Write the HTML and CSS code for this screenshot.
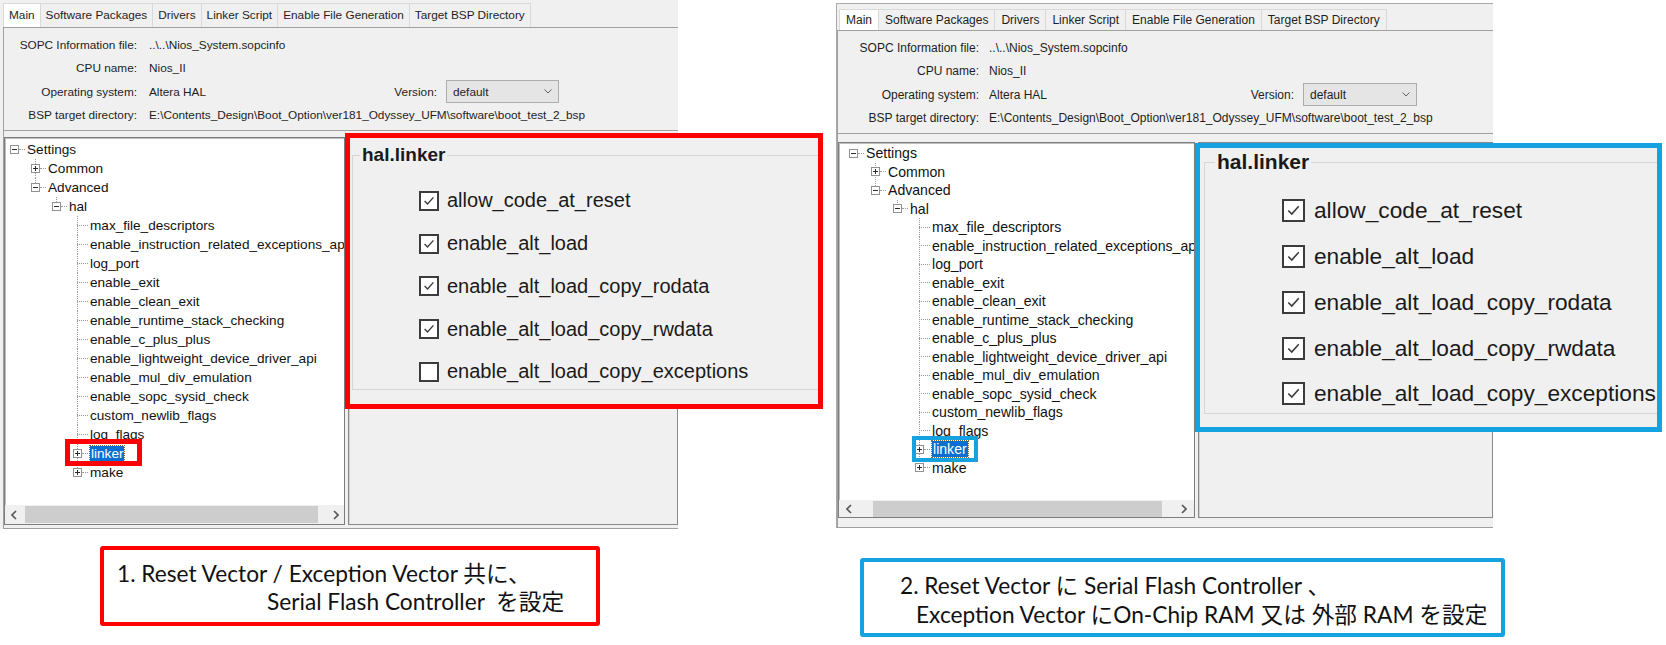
FILE: index.html
```html
<!DOCTYPE html>
<html lang="ja">
<head>
    <meta charset="UTF-8">
    <title>BSP Editor - hal.linker</title>
    <link rel="stylesheet" href="styles.css">
</head>
<body>
<div class="slide">

    <!-- 1. Reset / Exception 共に Serial Flash Controller -->
    <section class="case case-1">
        <div class="shot">
            <div class="tabs">
                <span class="tab active">Main</span>
                <span class="tab">Software Packages</span>
                <span class="tab">Drivers</span>
                <span class="tab">Linker Script</span>
                <span class="tab">Enable File Generation</span>
                <span class="tab">Target BSP Directory</span>
            </div>
            <div class="tab-body">
                <div class="info">
                    <span class="lbl">SOPC Information file:</span><span class="val">..\..\Nios_System.sopcinfo</span>
                    <span class="lbl">CPU name:</span><span class="val">Nios_II</span>
                    <span class="lbl">Operating system:</span>
                    <span class="val os"><span>Altera HAL</span><span class="ver">Version:</span><span class="select">default<svg viewBox="0 0 8 5"><path d="M0.5 0.5l3.5 3.5 3.5-3.5"/></svg></span></span>
                    <span class="lbl">BSP target directory:</span><span class="val">E:\Contents_Design\Boot_Option\ver181_Odyssey_UFM\software\boot_test_2_bsp</span>
                </div>
                <div class="split">
                    <div class="tree">
                        <div class="rows">
                            <div class="row l0"><i class="exp"></i><i class="tick"></i>Settings</div>
                            <div class="row l1 down"><i class="exp plus"></i><i class="tick"></i>Common</div>
                            <div class="row l1 up"><i class="exp"></i><i class="tick"></i>Advanced</div>
                            <div class="row l2 up"><i class="exp"></i><i class="tick"></i>hal</div>
                            <div class="row l3"><i class="twig"></i>max_file_descriptors</div>
                            <div class="row l3"><i class="twig"></i>enable_instruction_related_exceptions_api</div>
                            <div class="row l3"><i class="twig"></i>log_port</div>
                            <div class="row l3"><i class="twig"></i>enable_exit</div>
                            <div class="row l3"><i class="twig"></i>enable_clean_exit</div>
                            <div class="row l3"><i class="twig"></i>enable_runtime_stack_checking</div>
                            <div class="row l3"><i class="twig"></i>enable_c_plus_plus</div>
                            <div class="row l3"><i class="twig"></i>enable_lightweight_device_driver_api</div>
                            <div class="row l3"><i class="twig"></i>enable_mul_div_emulation</div>
                            <div class="row l3"><i class="twig"></i>enable_sopc_sysid_check</div>
                            <div class="row l3"><i class="twig"></i>custom_newlib_flags</div>
                            <div class="row l3"><i class="twig"></i>log_flags</div>
                            <div class="row l3"><i class="exp plus"></i><i class="tick"></i><span class="sel">linker</span></div>
                            <div class="row l3 last"><i class="exp plus"></i><i class="tick"></i>make</div>
                        </div>
                        <div class="hscroll">
                            <span class="arrow"><svg viewBox="0 0 6 10"><path d="M5 1L1 5l4 4"/></svg></span>
                            <span class="thumb"></span>
                            <span class="arrow"><svg viewBox="0 0 6 10"><path d="M1 1l4 4-4 4"/></svg></span>
                        </div>
                    </div>
                    <div class="props"></div>
                </div>
            </div>

            <div class="mark"></div>
            <div class="inset">
                <fieldset class="group">
                    <legend>hal.linker</legend>
                    <div class="checks">
                        <label class="check"><span class="cb"><svg viewBox="0 0 20 20"><path d="M4.5 10l3.7 3.8L15.5 5.5"/></svg></span>allow_code_at_reset</label>
                        <label class="check"><span class="cb"><svg viewBox="0 0 20 20"><path d="M4.5 10l3.7 3.8L15.5 5.5"/></svg></span>enable_alt_load</label>
                        <label class="check"><span class="cb"><svg viewBox="0 0 20 20"><path d="M4.5 10l3.7 3.8L15.5 5.5"/></svg></span>enable_alt_load_copy_rodata</label>
                        <label class="check"><span class="cb"><svg viewBox="0 0 20 20"><path d="M4.5 10l3.7 3.8L15.5 5.5"/></svg></span>enable_alt_load_copy_rwdata</label>
                        <label class="check"><span class="cb"></span>enable_alt_load_copy_exceptions</label>
                    </div>
                </fieldset>
            </div>
        </div>

        <div class="note">
            1. Reset Vector / Exception Vector 共に、<br>
            <span class="second">Serial Flash Controller&nbsp; を設定</span>
        </div>
    </section>

    <!-- 2. Reset は Serial Flash / Exception は RAM -->
    <section class="case case-2">
        <div class="shot">
            <div class="tabs">
                <span class="tab active">Main</span>
                <span class="tab">Software Packages</span>
                <span class="tab">Drivers</span>
                <span class="tab">Linker Script</span>
                <span class="tab">Enable File Generation</span>
                <span class="tab">Target BSP Directory</span>
            </div>
            <div class="tab-body">
                <div class="info">
                    <span class="lbl">SOPC Information file:</span><span class="val">..\..\Nios_System.sopcinfo</span>
                    <span class="lbl">CPU name:</span><span class="val">Nios_II</span>
                    <span class="lbl">Operating system:</span>
                    <span class="val os"><span>Altera HAL</span><span class="ver">Version:</span><span class="select">default<svg viewBox="0 0 8 5"><path d="M0.5 0.5l3.5 3.5 3.5-3.5"/></svg></span></span>
                    <span class="lbl">BSP target directory:</span><span class="val">E:\Contents_Design\Boot_Option\ver181_Odyssey_UFM\software\boot_test_2_bsp</span>
                </div>
                <div class="split">
                    <div class="tree">
                        <div class="rows">
                            <div class="row l0"><i class="exp"></i><i class="tick"></i>Settings</div>
                            <div class="row l1 down"><i class="exp plus"></i><i class="tick"></i>Common</div>
                            <div class="row l1 up"><i class="exp"></i><i class="tick"></i>Advanced</div>
                            <div class="row l2 up"><i class="exp"></i><i class="tick"></i>hal</div>
                            <div class="row l3"><i class="twig"></i>max_file_descriptors</div>
                            <div class="row l3"><i class="twig"></i>enable_instruction_related_exceptions_api</div>
                            <div class="row l3"><i class="twig"></i>log_port</div>
                            <div class="row l3"><i class="twig"></i>enable_exit</div>
                            <div class="row l3"><i class="twig"></i>enable_clean_exit</div>
                            <div class="row l3"><i class="twig"></i>enable_runtime_stack_checking</div>
                            <div class="row l3"><i class="twig"></i>enable_c_plus_plus</div>
                            <div class="row l3"><i class="twig"></i>enable_lightweight_device_driver_api</div>
                            <div class="row l3"><i class="twig"></i>enable_mul_div_emulation</div>
                            <div class="row l3"><i class="twig"></i>enable_sopc_sysid_check</div>
                            <div class="row l3"><i class="twig"></i>custom_newlib_flags</div>
                            <div class="row l3"><i class="twig"></i>log_flags</div>
                            <div class="row l3"><i class="exp plus"></i><i class="tick"></i><span class="sel">linker</span></div>
                            <div class="row l3 last"><i class="exp plus"></i><i class="tick"></i>make</div>
                        </div>
                        <div class="hscroll">
                            <span class="arrow"><svg viewBox="0 0 6 10"><path d="M5 1L1 5l4 4"/></svg></span>
                            <span class="thumb"></span>
                            <span class="arrow"><svg viewBox="0 0 6 10"><path d="M1 1l4 4-4 4"/></svg></span>
                        </div>
                    </div>
                    <div class="props"></div>
                </div>
            </div>

            <div class="mark"></div>
            <div class="inset">
                <fieldset class="group">
                    <legend>hal.linker</legend>
                    <div class="checks">
                        <label class="check"><span class="cb"><svg viewBox="0 0 20 20"><path d="M4.5 10l3.7 3.8L15.5 5.5"/></svg></span>allow_code_at_reset</label>
                        <label class="check"><span class="cb"><svg viewBox="0 0 20 20"><path d="M4.5 10l3.7 3.8L15.5 5.5"/></svg></span>enable_alt_load</label>
                        <label class="check"><span class="cb"><svg viewBox="0 0 20 20"><path d="M4.5 10l3.7 3.8L15.5 5.5"/></svg></span>enable_alt_load_copy_rodata</label>
                        <label class="check"><span class="cb"><svg viewBox="0 0 20 20"><path d="M4.5 10l3.7 3.8L15.5 5.5"/></svg></span>enable_alt_load_copy_rwdata</label>
                        <label class="check"><span class="cb"><svg viewBox="0 0 20 20"><path d="M4.5 10l3.7 3.8L15.5 5.5"/></svg></span>enable_alt_load_copy_exceptions</label>
                    </div>
                </fieldset>
            </div>
        </div>

        <div class="note">
            2. Reset Vector に Serial Flash Controller 、<br>
            <span class="second">Exception Vector にOn-Chip RAM 又は 外部 RAM を設定</span>
        </div>
    </section>

</div>
</body>
</html>
```

FILE: styles.css
```css
* {
    box-sizing: border-box;
}

body {
    margin: 0;
    background: #ffffff;
    font-family: "Liberation Sans", Arial, sans-serif;
    color: #000;
}

.slide {
    display: flex;
    width: 1666px;
    height: 645px;
    overflow: hidden;
}

/* 각 케이스: 스크린샷 + 설명 박스 */
.case-1 {
    width: 836px;
    --ui: 11.8px;
    --lbl-w: 133px;
    --lbl-gap: 12px;
    --os-w: 410px;
    --sel-w: 113px;
    --tree-w: 341px;
    --tree-font: 13.6px;
    --row-h: 19px;
    --i0: 5px;
    --ind: 21px;
    --accent: #ff0000;
}

.case-2 {
    flex: 1;
    padding-top: 3px;
    --ui: 12px;
    --lbl-w: 141px;
    --lbl-gap: 10px;
    --os-w: 428px;
    --sel-w: 114px;
    --tree-w: 357px;
    --tree-font: 14.1px;
    --row-h: 18.5px;
    --i0: 10px;
    --ind: 22px;
    --accent: #14a3e0;
}

/* ---------- screenshot ---------- */
.shot {
    position: relative;
    background: #f0f0f0;
    font-size: var(--ui);
    color: #1e1e1e;
}
.case-1 .shot { width: 678px; height: 529px; }
.case-2 .shot {
    width: 657px;
    height: 525px;
    border-top: 1px solid #a9a9a9;
    border-left: 1px solid #a9a9a9;
}

.tabs {
    display: flex;
    height: 27px;
    padding: 3px 0 0 3px;
}
.case-2 .tabs { height: 26px; padding: 5px 0 0 2px; }

.tab {
    padding: 0 5px;
    line-height: 23px;
    border: 1px solid #d9d9d9;
    border-bottom: none;
    margin-right: -1px;
    background: #f0f0f0;
    white-space: nowrap;
}
.case-2 .tab { padding: 0 6px; line-height: 20px; }
.tab.active { background: #ffffff; }

.tab-body {
    height: calc(100% - 27px);
    margin-left: 3px;
    border: 1px solid #a0a0a0;
    border-right: none;
    display: flex;
    flex-direction: column;
}
.case-2 .tab-body { height: calc(100% - 26px); margin-left: 0; }

.info {
    display: grid;
    grid-template-columns: var(--lbl-w) auto;
    grid-auto-rows: 23.5px;
    column-gap: var(--lbl-gap);
    align-items: center;
    padding-top: 5px;
    white-space: nowrap;
}
.lbl { text-align: right; }

.os {
    display: flex;
    align-items: center;
    width: var(--os-w);
}
.ver { margin-left: auto; margin-right: 9px; }
.select {
    width: var(--sel-w);
    height: 23px;
    border: 1px solid #adadad;
    background: #e5e5e5;
    padding: 0 6px;
    display: flex;
    align-items: center;
    justify-content: space-between;
}
.select svg {
    width: 8px;
    height: 5px;
    fill: none;
    stroke: #606060;
}

.split {
    flex: 1;
    display: flex;
    gap: 3px;
    margin-top: 3px;
    padding: 6px 0 3px;
    border-top: 1px solid #a0a0a0;
}
.case-2 .split { padding: 8px 0 9px; }

/* tree */
.tree {
    width: var(--tree-w);
    background: #ffffff;
    border: 1px solid #7d7d7d;
    box-shadow: inset 1px 1px 0 #c0c0c0;
    display: flex;
    flex-direction: column;
    overflow: hidden;
    font-size: var(--tree-font);
    color: #111;
}
.rows {
    flex: 1;
    padding-top: 2px;
}
.case-2 .rows { padding-top: 1px; }

.row {
    display: flex;
    align-items: center;
    height: var(--row-h);
    white-space: nowrap;
    background-repeat: no-repeat;
    background-image: repeating-linear-gradient(#9a9a9a 0 1px, transparent 1px 2px);
    background-size: 0 0;
}
.l0 { padding-left: var(--i0); }
.l1 { padding-left: calc(var(--i0) + var(--ind)); background-position: calc(var(--i0) + var(--ind) + 4px) 0; }
.l2 { padding-left: calc(var(--i0) + 2 * var(--ind)); background-position: calc(var(--i0) + 2 * var(--ind) + 4px) 0; }
.l3 { padding-left: calc(var(--i0) + 3 * var(--ind)); background-position: calc(var(--i0) + 3 * var(--ind) + 4px) 0; background-size: 1px 100%; }
.down { background-size: 1px 100%; }
.up, .last { background-size: 1px 50%; }

.exp {
    position: relative;
    flex: none;
    width: 9px;
    height: 9px;
    border: 1px solid #919191;
    background: #fff;
}
.exp::before {
    content: "";
    position: absolute;
    left: 1px;
    right: 1px;
    top: 3px;
    height: 1px;
    background: #2b2b2b;
}
.exp.plus::after {
    content: "";
    position: absolute;
    top: 1px;
    bottom: 1px;
    left: 3px;
    width: 1px;
    background: #2b2b2b;
}
.tick {
    flex: none;
    width: 6px;
    margin-right: 2px;
    border-top: 1px dotted #9a9a9a;
}
.twig {
    flex: none;
    width: 11px;
    margin: 0 2px 0 4px;
    border-top: 1px dotted #9a9a9a;
}
.sel {
    background: #0a6fd0;
    color: #fff;
    padding: 0 1px;
    outline: 1px dotted #8a6a2a;
}

.hscroll {
    flex: none;
    height: 19px;
    display: flex;
    align-items: center;
    background: #f0f0f0;
}
.arrow {
    width: 17px;
    display: flex;
    justify-content: center;
}
.arrow svg {
    width: 6px;
    height: 10px;
    fill: none;
    stroke: #555;
    stroke-width: 1.6;
}
.thumb {
    flex: 1;
    height: 17px;
    margin: 0 9px 0 3px;
    background: #cdcdcd;
}
.case-2 .hscroll { height: 17px; }
.case-2 .arrow { width: 20px; }
.case-2 .thumb { height: 16px; margin: 0 12px 0 14px; }

.props {
    flex: 1;
    background: #f0f0f0;
    border: 1px solid #8a8a8a;
    box-shadow: inset 1px 1px 0 #d0d0d0;
}

/* 강조 표시 (겹쳐 놓은 것) */
.mark {
    position: absolute;
    border: 5px solid var(--accent);
}
.case-1 .mark { left: 65px; top: 439px; width: 77px; height: 27px; }
.case-2 .mark { left: 75px; top: 432px; width: 66px; height: 26px; border-width: 4px; }

.inset {
    position: absolute;
    overflow: hidden;
    border: 5px solid var(--accent);
    background: #f0f0f0;
    color: #1a1a1a;
}
.case-1 .inset { left: 345px; top: 133px; width: 478px; height: 276px; }
.case-2 .inset { left: 358px; top: 139px; width: 467px; height: 289px; }

.group {
    margin: 6px -30px 0 2px;
    padding: 0;
    height: 246px;
    border: 1px solid #d6d6d6;
}
.case-2 .group { margin: 2px -30px 0 4px; height: 264px; }

.group legend {
    margin-left: 7px;
    padding: 0 2px;
    font-weight: bold;
    font-size: 19px;
    line-height: 22px;
}
.case-2 .group legend { margin-left: 10px; font-size: 21px; line-height: 24px; }

.checks {
    padding: 13.5px 0 0 66px;
    font-size: 20px;
}
.case-2 .checks { padding: 14px 0 0 77px; font-size: 22.7px; }

.check {
    display: flex;
    align-items: center;
    gap: 8px;
    height: 42.75px;
}
.case-2 .check { gap: 9px; height: 45.75px; }

.cb {
    flex: none;
    width: 20px;
    height: 20px;
    border: 2px solid #3c3c3c;
    background: #fff;
}
.case-2 .cb { width: 23px; height: 23px; }
.cb svg {
    display: block;
    width: 100%;
    height: 100%;
    fill: none;
    stroke: #3c3c3c;
    stroke-width: 1.7;
}

/* ---------- 설명 박스 ---------- */
.note {
    border: 4px solid var(--accent);
    border-radius: 3px;
    font-family: Lato, "Noto Sans CJK JP", sans-serif;
    font-size: 22.7px;
    line-height: 28px;
    white-space: nowrap;
    color: #111;
}
.case-1 .note {
    width: 500px;
    height: 80px;
    margin: 17px 0 0 100px;
    padding: 10px 0 0 13px;
}
.case-1 .second { padding-left: 150px; }

.case-2 .note {
    width: 645px;
    height: 79px;
    margin: 30px 0 0 24px;
    padding: 9px 0 0 36px;
    line-height: 29px;
}
.case-2 .second { padding-left: 16px; }
```
